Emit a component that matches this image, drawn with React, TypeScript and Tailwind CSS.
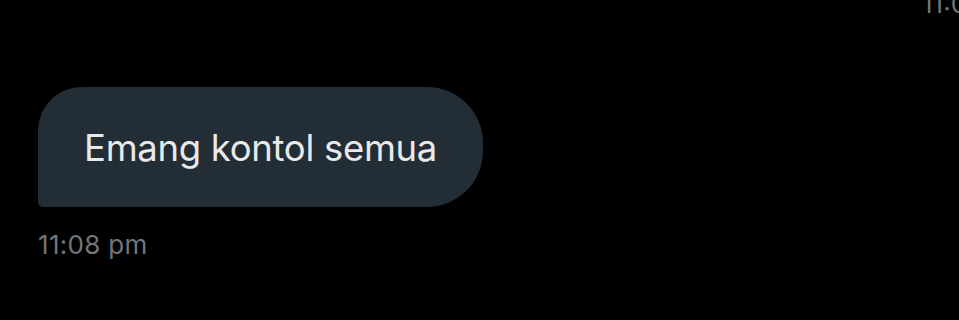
export default function App() {
  return (
    <div className="w-[959px] h-[320px] bg-black overflow-hidden relative" style={{ fontFamily: "Inter, 'Noto Sans', sans-serif" }}>
      <div className="absolute left-[922px] top-[-9px] text-[26px] text-[#71767b] leading-none whitespace-nowrap">11:08 pm</div>
      <div className="pt-[87px] pl-[38px] flex flex-col items-start">
        <div className="h-[120px] w-[445px] bg-[#232d35] rounded-tl-[44px] rounded-tr-[56px] rounded-br-[56px] rounded-bl-[5px] flex items-center pl-[46px]">
          <span className="text-[36.5px] text-[#e7e9ea] leading-none tracking-[-0.3px] pt-[2px]">Emang kontol semua</span>
        </div>
        <div className="mt-[25px] text-[26px] text-[#71767b] leading-none tracking-[0.3px]">11:08 pm</div>
      </div>
    </div>
  );
}
